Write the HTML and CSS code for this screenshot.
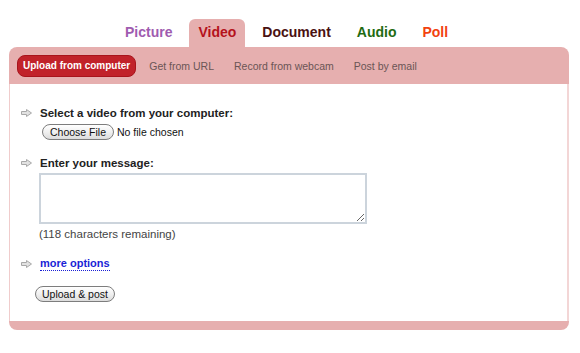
FILE: index.html
```html
<!DOCTYPE html>
<html lang="en">
<head>
  <meta charset="UTF-8" />
  <title>Post media</title>
  <link rel="stylesheet" href="styles.css">
</head>
<body>
  <nav class="tabs">
    <a class="tab tab-picture">Picture</a>
    <a class="tab tab-video active">Video</a>
    <a class="tab tab-document">Document</a>
    <a class="tab tab-audio">Audio</a>
    <a class="tab tab-poll">Poll</a>
  </nav>

  <div class="panel">
    <div class="subnav">
      <a class="sub active">Upload from computer</a>
      <a class="sub">Get from URL</a>
      <a class="sub">Record from webcam</a>
      <a class="sub">Post by email</a>
    </div>

    <div class="panel-body">
      <div class="label">
        <svg class="arrow" width="11" height="8" viewBox="0 0 11 8"><path d="M0.5 2.5H5.5V0.5L10.5 4L5.5 7.5V5.5H0.5Z" fill="#e2e2e2" stroke="#a8a8a8" stroke-width="1"/></svg>
        Select a video from your computer:
      </div>
      <div class="file-row">
        <button class="mac-btn" type="button">Choose File</button>
        <span class="no-file">No file chosen</span>
      </div>

      <div class="label label-gap">
        <svg class="arrow" width="11" height="8" viewBox="0 0 11 8"><path d="M0.5 2.5H5.5V0.5L10.5 4L5.5 7.5V5.5H0.5Z" fill="#e2e2e2" stroke="#a8a8a8" stroke-width="1"/></svg>
        Enter your message:
      </div>
      <textarea class="message"></textarea>
      <div class="remaining">(118 characters remaining)</div>

      <div class="label label-more">
        <svg class="arrow" width="11" height="8" viewBox="0 0 11 8"><path d="M0.5 2.5H5.5V0.5L10.5 4L5.5 7.5V5.5H0.5Z" fill="#e2e2e2" stroke="#a8a8a8" stroke-width="1"/></svg>
        <a class="more">more options</a>
      </div>

      <button class="mac-btn post-btn" type="button">Upload &amp; post</button>
    </div>
    <div class="panel-foot"></div>
  </div>
</body>
</html>
```
FILE: styles.css
```css
* {
  margin: 0;
  padding: 0;
  box-sizing: border-box;
}

body {
  background: #fff;
  font-family: 'Liberation Sans', Arial, sans-serif;
  color: #222;
}

.tabs {
  display: flex;
  gap: 8px;
  padding: 19px 0 0 116px;
  height: 47px;
}

.tab {
  display: block;
  padding: 5px 9px 0;
  font-size: 14px;
  font-weight: bold;
  border-radius: 6px 6px 0 0;
}

.tab-picture { color: #9f5cb0; }
.tab-video { color: #b5121b; }
.tab-document { color: #4a1212; }
.tab-audio { color: #1f6b12; }
.tab-poll { color: #f2420f; }

.tab.active {
  background: #e6afaf;
}

.panel {
  margin: 0 11px 0 9px;
}

.subnav {
  display: flex;
  align-items: center;
  height: 37px;
  padding: 0 8px;
  background: #e6afaf;
  border-radius: 8px 8px 0 0;
}

.sub {
  font-size: 10.5px;
  color: #6a5555;
  padding: 4px 10px;
}

.sub.active {
  background: #c1222a;
  color: #fff;
  font-size: 10px;
  font-weight: bold;
  border-radius: 8px;
  border: 1px solid #a8141c;
  padding: 4px 5px;
  margin-right: 3px;
  height: 22px;
}

.panel-body {
  border-left: 1px solid #f0cccc;
  border-right: 2px solid #f3d6d6;
  padding: 21px 0 19px 11px;
}

.label {
  display: flex;
  align-items: center;
  gap: 8px;
  font-size: 11.5px;
  font-weight: bold;
  height: 15px;
}

.label-gap {
  margin-top: 15px;
}

.label-more {
  margin-top: 16px;
}

.arrow {
  display: block;
  flex: none;
}

.file-row {
  display: flex;
  align-items: center;
  gap: 3px;
  margin: 4px 0 0 21px;
}

.mac-btn {
  font-family: 'Liberation Sans', Arial, sans-serif;
  font-size: 10.5px;
  color: #111;
  background: linear-gradient(#ffffff, #f0f0f0 50%, #dcdcdc);
  border: 1px solid #7d7d7d;
  border-radius: 8px;
  padding: 1px 7px;
  height: 16px;
  line-height: 12px;
}

.no-file {
  font-size: 10.5px;
  color: #111;
}

.message {
  display: block;
  width: 328px;
  height: 51px;
  margin: 3px 0 0 18px;
  border: 2px solid #ccd4dc;
  resize: both;
}

.remaining {
  font-size: 11.5px;
  color: #444;
  margin: 4px 0 0 18px;
}

.more {
  color: #1a1fd6;
  font-size: 11px;
  border-bottom: 1px dotted #1a1fd6;
  line-height: 13px;
}

.post-btn {
  display: block;
  margin: 15px 0 0 14px;
  padding: 1px 6px;
}

.panel-foot {
  height: 9px;
  background: #e6afaf;
  border-radius: 0 0 8px 8px;
}
```
